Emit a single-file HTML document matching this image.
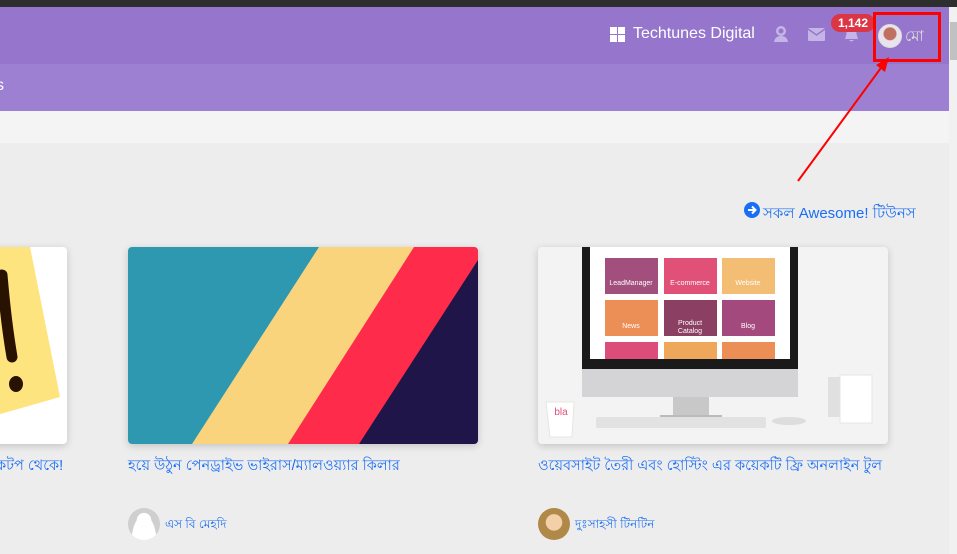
<!DOCTYPE html>
<html><head><meta charset="utf-8"><style>
*{margin:0;padding:0;box-sizing:border-box}
body{width:957px;height:554px;overflow:hidden;background:#ededed;font-family:"Liberation Sans","Noto Sans CJK SC",sans-serif;position:relative}
.a{position:absolute}
.card{position:absolute;border-radius:4px;overflow:hidden;box-shadow:0 2px 8px rgba(0,0,0,.18)}
.t{position:absolute;color:#1a6ef5;font-size:14.5px;white-space:nowrap}
.n{position:absolute;color:#1a6ef5;font-size:12px;white-space:nowrap}
</style></head><body>
<div class="a" style="left:0;top:0;width:957px;height:7px;background:#2e2e2e"></div>
<div class="a" style="left:0;top:7px;width:949px;height:57px;background:#9676cc"></div>
<div class="a" style="left:0;top:64px;width:949px;height:47px;background:#9d80d1"></div>
<div class="a" style="left:-4px;top:77px;color:#fff;font-size:16px">s</div>
<div class="a" style="left:0;top:111px;width:949px;height:32px;background:#f4f4f4"></div>
<div class="a" style="left:949px;top:7px;width:8px;height:547px;background:#f1f1f1"></div>
<div class="a" style="left:950px;top:22px;width:7px;height:38px;background:#c1c1c1"></div>
<svg class="a" style="left:610px;top:27px" width="16" height="16"><rect x="0" y="0" width="7" height="7" fill="#fff"/><rect x="8" y="0" width="7" height="7" fill="#fff"/><rect x="0" y="8" width="7" height="7" fill="#fff"/><rect x="8" y="8" width="7" height="7" fill="#fff"/></svg>
<div class="a" style="left:633px;top:25px;color:#fff;font-size:16px">Techtunes Digital</div>
<svg class="a" style="left:773px;top:25px" width="16" height="18"><circle cx="8" cy="6" r="5" fill="#c5b5e6"/><path d="M1 17 Q2 11 8 11 Q14 11 15 17Z" fill="#c5b5e6"/><circle cx="8" cy="6" r="2.5" fill="#9676cc"/></svg>
<svg class="a" style="left:808px;top:28px" width="17" height="13"><rect width="17" height="13" rx="1" fill="#c5b5e6"/><path d="M0 1 L8.5 7 L17 1" stroke="#9676cc" stroke-width="1.5" fill="none"/></svg>
<svg class="a" style="left:843px;top:26px" width="17" height="17"><path d="M8.5 1 C4 1 3.5 5 3.5 8 L2 13 L15 13 L13.5 8 C13.5 5 13 1 8.5 1Z M6 14 Q8.5 17 11 14Z" fill="#c5b5e6"/></svg>
<div class="a" style="left:831px;top:14px;background:#dc3545;color:#fff;font-weight:bold;font-size:12px;padding:2px 7px;border-radius:9px;line-height:14px">1,142</div>
<div class="a" style="left:878px;top:24px;width:24px;height:24px;border-radius:50%;background:radial-gradient(circle at 50% 40%,#c07060 0 6px,#e9e4ec 7px);border:1px solid #ddd"></div>
<div class="a" style="left:905px;top:25px;color:#ddd;font-size:15px">মো</div>
<div class="a" style="left:873px;top:12px;width:68px;height:50px;border:3px solid #f00"></div>
<svg class="a" style="left:790px;top:55px" width="110" height="130"><line x1="8" y1="126" x2="96" y2="6" stroke="#f00" stroke-width="2"/><path d="M99 2 L86 10 L95 17Z" fill="#f00"/></svg>
<svg class="a" style="left:744px;top:202px" width="16" height="16"><circle cx="8" cy="8" r="8" fill="#1a6ef5"/><path d="M4 8 H11 M8 4.5 L11.5 8 L8 11.5" stroke="#fff" stroke-width="2" fill="none"/></svg>
<div class="t" style="left:763px;top:202px;font-size:15px">সকল Awesome! টিউনস</div>
<div class="card" style="left:-10px;top:247px;width:77px;height:197px;background:#fff">
<svg width="77" height="197"><polygon points="0,0 40,0 70,150 0,170" fill="#fde47f"/><path d="M12 28 Q16 75 22 110" stroke="#2a1200" stroke-width="11" stroke-linecap="round" fill="none"/><ellipse cx="26" cy="137" rx="7" ry="8" fill="#2a1200"/></svg></div>
<div class="t" style="left:-4px;top:455px">কটপ থেকে!</div>
<div class="card" style="left:128px;top:247px;width:350px;height:197px">
<svg width="350" height="197"><rect width="350" height="197" fill="#2e98b1"/><polygon points="191,0 350,0 350,197 64,197" fill="#fad47d"/><polygon points="286,0 350,0 350,197 160,197" fill="#fe2c4a"/><polygon points="350,13 350,197 231,197" fill="#1f1548"/></svg></div>
<div class="t" style="left:128px;top:455px">হয়ে উঠুন পেনড্রাইভ ভাইরাস/ম্যালওয়্যার কিলার</div>
<div class="a" style="left:128px;top:508px;width:32px;height:32px;border-radius:50%;background:radial-gradient(circle at 50% 38%,#fff 0 7px,transparent 7.5px),radial-gradient(ellipse at 50% 100%,#fff 0 12px,transparent 12.5px) ,#cfcfcf"></div>
<div class="n" style="left:165px;top:516px">এস বি মেহদি</div>
<div class="card" style="left:538px;top:247px;width:350px;height:197px;background:#f3f3f3">
<svg width="350" height="197">
<rect x="44" y="0" width="216" height="143" fill="#1a1a1a"/>
<rect x="52" y="0" width="200" height="112" fill="#fff"/>
<rect x="67" y="11" width="53" height="36" fill="#a24f7e"/><rect x="126" y="11" width="53" height="36" fill="#e05077"/><rect x="184" y="11" width="53" height="36" fill="#f3bd73"/>
<rect x="67" y="53" width="53" height="36" fill="#ec8f57"/><rect x="126" y="53" width="53" height="36" fill="#8a3f63"/><rect x="184" y="53" width="53" height="36" fill="#a4497e"/>
<rect x="67" y="95" width="53" height="17" fill="#dd4d7a"/><rect x="126" y="95" width="53" height="17" fill="#efa85b"/><rect x="184" y="95" width="53" height="17" fill="#ec8f57"/>
<g fill="#fff" font-size="7" font-family="Liberation Sans" text-anchor="middle"><text x="93" y="38">LeadManager</text><text x="152" y="38">E-commerce</text><text x="210" y="38">Website</text><text x="93" y="81">News</text><text x="152" y="78">Product</text><text x="152" y="86">Catalog</text><text x="210" y="81">Blog</text></g>
<rect x="44" y="122" width="216" height="28" fill="#d4d4d6"/>
<rect x="135" y="150" width="36" height="20" fill="#c8c8c8"/><rect x="122" y="168" width="62" height="4" fill="#bbb"/>
<rect x="58" y="170" width="170" height="11" rx="2" fill="#e2e2e2"/>
<ellipse cx="251" cy="174" rx="17" ry="4" fill="#ddd"/>
<path d="M8 155 L36 155 L34 190 L12 190Z" fill="#fff" stroke="#e5e5e5"/><text x="23" y="168" fill="#e05077" font-size="10" text-anchor="middle" font-family="Liberation Sans">bla</text>
<rect x="290" y="130" width="18" height="40" fill="#e0e0e0"/><rect x="302" y="128" width="32" height="48" fill="#fff" stroke="#e5e5e5"/>
</svg></div>
<div class="t" style="left:538px;top:455px">ওয়েবসাইট তৈরী এবং হোস্টিং এর কয়েকটি ফ্রি অনলাইন টুল</div>
<div class="a" style="left:538px;top:508px;width:32px;height:32px;border-radius:50%;background:radial-gradient(circle at 50% 45%,#f3d0a8 0 8px,transparent 8.5px),#b08848"></div>
<div class="n" style="left:575px;top:516px">দুঃসাহসী টিনটিন</div>
</body></html>
